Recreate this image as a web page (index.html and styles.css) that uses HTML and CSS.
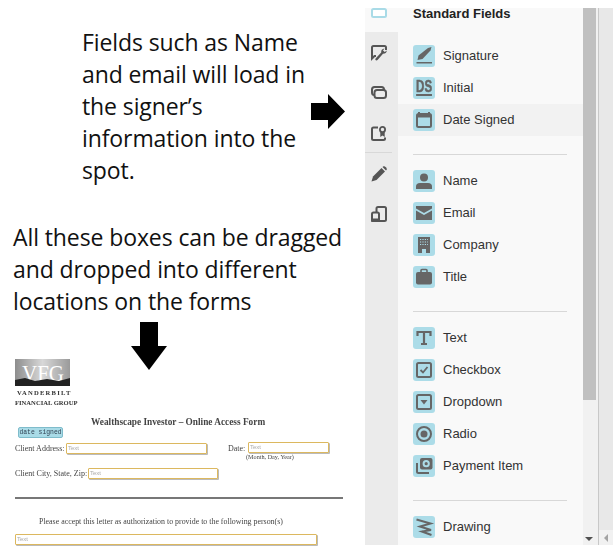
FILE: index.html
```html
<!DOCTYPE html>
<html lang="en">
<head>
  <meta charset="UTF-8" />
  <title>Standard Fields</title>
  <link rel="stylesheet" href="styles.css">
</head>
<body>
  <div class="page">
    <div class="notes">
      <div class="note-row">
        <p class="note note-first">Fields such as Name and email will load in the signer’s information into the spot.</p>
        <svg class="arrow-right" width="34" height="35" viewBox="0 0 34 35"><path d="M0 9H17V0L34 17.5L17 35V26H0Z" fill="#000"/></svg>
      </div>
      <p class="note note-second">All these boxes can be dragged and dropped into different locations on the forms</p>

      <div class="doc-head">
        <div class="brand">
          <svg class="logo" width="55" height="27" viewBox="0 0 55 27">
            <defs>
              <linearGradient id="sky" x1="0" x2="1" y1="0" y2="0">
                <stop offset="0" stop-color="#8d8d8d"/>
                <stop offset="0.5" stop-color="#d8d8d8"/>
                <stop offset="1" stop-color="#9a9a9a"/>
              </linearGradient>
            </defs>
            <rect width="55" height="27" fill="url(#sky)"/>
            <text x="7" y="22" textLength="42" lengthAdjust="spacingAndGlyphs" class="logo-text">VFG</text>
            <path d="M0 27V21L10 19L20 22L32 20L44 22L55 19V27Z" fill="#222"/>
          </svg>
          <div class="brand-line brand-top">VANDERBILT</div>
          <div class="brand-line brand-bottom">FINANCIAL GROUP</div>
        </div>
        <svg class="arrow-down" width="36" height="48" viewBox="0 0 36 48"><path d="M9 0H27V24H36L18 48L0 24H9Z" fill="#000"/></svg>
      </div>

      <div class="doc-body">
        <div class="doc-title">Wealthscape Investor – Online Access Form</div>
        <div class="tag">date signed</div>

        <div class="line line-address">
          <span class="label-address">Client Address:</span>
          <span class="field field-address">Text</span>
          <span class="date-label">Date:</span>
          <span class="date-wrap">
            <span class="field field-date">Text</span>
            <span class="date-hint">(Month, Day, Year)</span>
          </span>
        </div>
        <div class="line">
          <span class="label-city">Client City, State, Zip:</span>
          <span class="field field-city">Text</span>
        </div>
        <div class="doc-rule"></div>
        <div class="doc-para">Please accept this letter as authorization to provide to the following person(s)</div>
        <div class="field field-wide">Text</div>
      </div>
    </div>

    <div class="panel">
      <div class="rail">
        <div class="tab tab-active">
          <svg width="16" height="10" viewBox="0 0 16 10"><rect x="1" y="1" width="14" height="8" rx="1.5" fill="#fff" stroke="#a9dbe7" stroke-width="2"/></svg>
        </div>
        <div class="tab tab-sign">
          <svg width="16" height="16" viewBox="0 0 16 16"><path d="M5 11H3.5L1 13.5V2.5Q1 1 2.5 1H13.5Q15 1 15 2.5V5" fill="none" stroke="#555" stroke-width="2"/><path d="M15.8 5.5Q15.5 8.8 12 8.8L7 14.5Q5.5 16 4.5 15T5.5 12.5L10.2 7.5Q9.8 4 13.5 3.5L12 5.5L13.8 7Z" fill="#555"/></svg>
        </div>
        <div class="tab tab-stack">
          <svg width="16" height="13" viewBox="0 0 16 13"><rect x="1" y="1" width="12" height="8" rx="2.5" fill="none" stroke="#555" stroke-width="2"/><rect x="3.5" y="4" width="11.5" height="8" rx="2.5" fill="#ebebeb" stroke="#555" stroke-width="2"/></svg>
        </div>
        <div class="tab tab-cert">
          <svg width="16" height="15" viewBox="0 0 16 15"><path d="M7 1.5H2.5Q1 1.5 1 3V12.5Q1 14 2.5 14H12.5Q14 14 14 12.5V11.5" fill="none" stroke="#555" stroke-width="2"/><circle cx="11.5" cy="3.5" r="2.6" fill="none" stroke="#555" stroke-width="1.8"/><path d="M9.3 6V11L11.5 9.5L13.7 11V6Z" fill="#555"/></svg>
        </div>
        <div class="tab tab-pencil">
          <svg width="16" height="16" viewBox="0 0 16 16"><path d="M0.5 15.5L2 10.5L10.5 2L14 5.5L5.5 14Z" fill="#555"/><path d="M11.5 1L12.5 0.3Q13.5 -0.2 14.8 1.2T15.8 3.5L15 4.5Z" fill="#555"/></svg>
        </div>
        <div class="tab tab-device">
          <svg width="16" height="16" viewBox="0 0 16 16"><path d="M5.5 6V2.5Q5.5 1 7 1H13.5Q15 1 15 2.5V13.5Q15 15 13.5 15H8" fill="none" stroke="#555" stroke-width="2"/><rect x="1" y="6.5" width="7" height="8.5" rx="1.5" fill="#ebebeb" stroke="#555" stroke-width="2"/><rect x="0" y="12.5" width="9" height="3.5" rx="1" fill="#555"/></svg>
        </div>
      </div>

      <div class="fields">
        <h2 class="fields-title">Standard Fields</h2>

        <div class="group">
          <div class="row">
            <span class="icon"><svg width="22" height="22" viewBox="0 0 22 22"><path d="M4.5 15L5.5 10.5L15 3L18.5 2L17.5 5.5L9.5 14Z" fill="#666"/><rect x="3.5" y="17" width="15.5" height="1.5" fill="#666"/></svg></span>
            <span class="row-label">Signature</span>
          </div>
          <div class="row">
            <span class="icon"><span class="icon-ds">DS</span></span>
            <span class="row-label">Initial</span>
          </div>
          <div class="row row-hover">
            <span class="icon"><svg width="22" height="22" viewBox="0 0 22 22"><path d="M6 3V5M16 3V5" stroke="#666" stroke-width="2"/><rect x="4" y="5" width="14" height="13" rx="1.5" fill="none" stroke="#666" stroke-width="2"/><rect x="4" y="5" width="14" height="3.5" fill="#666"/></svg></span>
            <span class="row-label">Date Signed</span>
          </div>
        </div>

        <div class="sep"></div>
        <div class="group">
          <div class="row">
            <span class="icon"><svg width="22" height="22" viewBox="0 0 22 22"><circle cx="11" cy="7.5" r="4" fill="#666"/><path d="M3 19V16.5Q3 13 7 13H15Q19 13 19 16.5V19Z" fill="#666"/></svg></span>
            <span class="row-label">Name</span>
          </div>
          <div class="row">
            <span class="icon"><svg width="22" height="22" viewBox="0 0 22 22"><path d="M3 4H19V6.5L11 11L3 6.5Z" fill="#666"/><path d="M3 8.5L11 13L19 8.5V18H3Z" fill="#666"/></svg></span>
            <span class="row-label">Email</span>
          </div>
          <div class="row">
            <span class="icon"><svg width="22" height="22" viewBox="0 0 22 22"><path d="M5 3H17V19H13V15H9V19H5Z" fill="#666"/><path d="M7 5.5H15M7 8H15M7 10.5H15" stroke="#acdce8" stroke-width="1" stroke-dasharray="1.2 1.2"/></svg></span>
            <span class="row-label">Company</span>
          </div>
          <div class="row">
            <span class="icon"><svg width="22" height="22" viewBox="0 0 22 22"><path d="M8 6V4.5Q8 3.5 9 3.5H13Q14 3.5 14 4.5V6" fill="none" stroke="#666" stroke-width="1.6"/><rect x="3" y="6" width="16" height="12.5" rx="2" fill="#666"/></svg></span>
            <span class="row-label">Title</span>
          </div>
        </div>

        <div class="sep"></div>
        <div class="group">
          <div class="row">
            <span class="icon"><svg width="22" height="22" viewBox="0 0 22 22"><path d="M4.5 9V5H17.5V9M11 5V17M8 17H14" fill="none" stroke="#666" stroke-width="2.2"/></svg></span>
            <span class="row-label">Text</span>
          </div>
          <div class="row">
            <span class="icon"><svg width="22" height="22" viewBox="0 0 22 22"><rect x="4" y="4" width="14" height="14" rx="1.5" fill="none" stroke="#666" stroke-width="2"/><path d="M7.5 11L10 13.5L14.5 8" fill="none" stroke="#666" stroke-width="1.8"/></svg></span>
            <span class="row-label">Checkbox</span>
          </div>
          <div class="row">
            <span class="icon"><svg width="22" height="22" viewBox="0 0 22 22"><rect x="4" y="4" width="14" height="14" rx="1.5" fill="none" stroke="#666" stroke-width="2"/><path d="M7.5 9H14.5L11 13.5Z" fill="#666"/></svg></span>
            <span class="row-label">Dropdown</span>
          </div>
          <div class="row">
            <span class="icon"><svg width="22" height="22" viewBox="0 0 22 22"><circle cx="11" cy="11" r="7" fill="none" stroke="#666" stroke-width="2"/><circle cx="11" cy="11" r="3.5" fill="#666"/></svg></span>
            <span class="row-label">Radio</span>
          </div>
          <div class="row">
            <span class="icon"><svg width="22" height="22" viewBox="0 0 22 22"><rect x="7" y="3" width="12.5" height="11.5" rx="2" fill="#666"/><circle cx="13.2" cy="8.7" r="3.6" fill="#acdce8"/><circle cx="13.2" cy="8.7" r="1.6" fill="#666"/><path d="M4 8V16.5Q4 18 5.5 18H16" fill="none" stroke="#666" stroke-width="2"/></svg></span>
            <span class="row-label">Payment Item</span>
          </div>
        </div>

        <div class="sep"></div>
        <div class="group">
          <div class="row">
            <span class="icon"><svg width="22" height="22" viewBox="0 0 22 22"><path d="M3.5 3.5L17.5 7.5L7 10.5L18 14L9 15.5L18.5 19" fill="none" stroke="#666" stroke-width="2"/></svg></span>
            <span class="row-label">Drawing</span>
          </div>
        </div>
      </div>

      <div class="scrollbar">
        <div class="thumb"></div>
        <div class="scroll-down"></div>
      </div>
      <div class="outer-track">
        <div class="scroll-corner"><div class="scroll-left"></div></div>
      </div>
    </div>
  </div>
</body>
</html>
```

FILE: styles.css
```css
body {
  margin: 0;
  background: #fff;
  overflow: hidden;
}

.page {
  display: flex;
  width: 615px;
  height: 553px;
  overflow: hidden;
}

/* left column */
.notes {
  width: 365px;
  flex: none;
}

.note {
  margin: 0;
  font-family: "Open Sans", sans-serif;
  font-size: 23px;
  line-height: 32px;
  letter-spacing: -0.1px;
  color: #111;
}

.note-row {
  display: flex;
  align-items: flex-start;
  padding: 26px 0 0 82px;
}

.note-first {
  width: 229px;
  flex: none;
}

.arrow-right {
  margin-top: 68px;
}

.note-second {
  margin: 35px 0 0 13px;
  width: 340px;
}

/* scanned form */
.doc-head {
  display: flex;
  align-items: flex-start;
  padding: 5px 0 0 15px;
}

.brand {
  width: 116px;
  flex: none;
  padding-top: 37px;
  font-family: "Liberation Serif", serif;
  color: #333;
  filter: blur(0.35px);
}

.logo {
  display: block;
}

.logo-text {
  font-family: "Liberation Serif", serif;
  font-size: 24px;
  fill: #fff;
}

.brand-line {
  font-size: 6.6px;
  font-weight: bold;
  white-space: nowrap;
}

.brand-top {
  margin-top: 2px;
  padding-left: 2px;
  line-height: 10px;
  letter-spacing: 1.2px;
}

.brand-bottom {
  line-height: 9px;
}

.doc-body {
  font-family: "Liberation Serif", serif;
  font-size: 8px;
  color: #444;
  filter: blur(0.35px);
}

.doc-title {
  margin-top: 9px;
  padding-left: 91px;
  font-size: 9.3px;
  line-height: 12px;
  font-weight: bold;
  white-space: nowrap;
}

.tag {
  width: 45px;
  height: 11px;
  margin: -1px 0 0 18px;
  box-sizing: border-box;
  background: #a9dbe7;
  border: 1px solid #7fbccb;
  border-radius: 2px;
  font-family: "Liberation Mono", monospace;
  font-size: 6.4px;
  line-height: 9px;
  text-align: center;
  white-space: nowrap;
  color: #345;
}

.line {
  display: flex;
  align-items: flex-start;
  padding-left: 15px;
  line-height: 11px;
  white-space: nowrap;
}

.line-address {
  height: 25px;
  margin-top: 5px;
}

.label-address {
  width: 49px;
  flex: none;
}

.label-city {
  width: 71px;
  flex: none;
}

.field {
  display: block;
  flex: none;
  box-sizing: border-box;
  height: 11px;
  border: 1px solid #dcb85f;
  box-shadow: 1px 1px 0 #bbb;
  border-radius: 1px;
  background: #fff;
  font-family: "Liberation Sans", sans-serif;
  font-size: 6px;
  line-height: 8px;
  padding-left: 1px;
  color: #aaa;
}

.field-address {
  width: 141px;
  margin-left: 2px;
}

.date-label {
  margin-left: 21px;
  width: 20px;
  flex: none;
}

.date-wrap {
  display: block;
  width: 81px;
  margin-top: -1px;
}

.field-date {
  width: 81px;
}

.date-hint {
  display: block;
  margin-left: -2px;
  font-size: 6.2px;
  line-height: 7px;
}

.field-city {
  width: 130px;
  margin-left: 2px;
}

.doc-rule {
  width: 328px;
  height: 2px;
  margin: 18px 0 0 15px;
  background: #777;
}

.doc-para {
  margin: 17px 0 0 39px;
  font-size: 7.9px;
  line-height: 11px;
  white-space: nowrap;
}

.field-wide {
  width: 302px;
  margin: 7px 0 0 15px;
}

/* right panel */
.panel {
  display: flex;
  width: 248px;
  height: 537px;
  margin-top: 8px;
  flex: none;
  font-family: "Liberation Sans", sans-serif;
}

.rail {
  width: 33px;
  flex: none;
  background: #ebebeb;
}

.tab {
  padding-left: 6px;
}

.tab svg {
  display: block;
}

.tab-active {
  height: 24px;
  background: #f9f9f9;
}

.tab-sign {
  padding-top: 13px;
}

.tab-stack {
  padding-top: 25px;
}

.tab-cert {
  padding-top: 27px;
}

.tab-pencil {
  margin-top: 11px;
  margin-right: 6px;
  padding-top: 13px;
  border-top: 1px solid #d8d8d8;
}

.tab-device {
  padding-top: 24px;
}

.fields {
  width: 185px;
  flex: none;
  background: #f9f9f9;
}

.fields-title {
  margin: -1px 0 0;
  padding-left: 15px;
  height: 33px;
  font-size: 13px;
  line-height: 14px;
  font-weight: bold;
  color: #222;
}

.row {
  display: flex;
  align-items: center;
  gap: 8px;
  height: 32px;
  padding-left: 15px;
  font-size: 13px;
  color: #333;
}

.row-label {
  margin-top: -2px;
}

.row-hover {
  background: #f2f2f2;
}

.icon {
  display: flex;
  align-items: center;
  justify-content: center;
  width: 22px;
  height: 22px;
  flex: none;
  background: #acdce8;
  border-radius: 3px;
}

.icon-ds {
  font-size: 16px;
  line-height: 14px;
  font-weight: bold;
  color: #666;
  -webkit-text-stroke: 0.5px #666;
  border-bottom: 2px solid #666;
  transform: scaleX(0.72);
}

.sep {
  height: 1px;
  margin: 18px 16px 10px 15px;
  background: #d8d8d8;
}

.scrollbar {
  position: relative;
  width: 15px;
  flex: none;
  background: #f1f1f1;
  border-right: 1px solid #c8c8c8;
}

.thumb {
  width: 13px;
  height: 392px;
  background: #c0c0c0;
}

.scroll-down {
  position: absolute;
  left: 2px;
  bottom: 4px;
  border-left: 4px solid transparent;
  border-right: 4px solid transparent;
  border-top: 4px solid #505050;
}

.outer-track {
  display: flex;
  align-items: flex-end;
  flex: 1;
  background: #e8e8e8;
}

.scroll-corner {
  display: flex;
  align-items: center;
  justify-content: center;
  width: 100%;
  height: 15px;
  background: #f1f1f1;
}

.scroll-left {
  border-top: 4px solid transparent;
  border-bottom: 4px solid transparent;
  border-right: 4px solid #a3a3a3;
}
```
